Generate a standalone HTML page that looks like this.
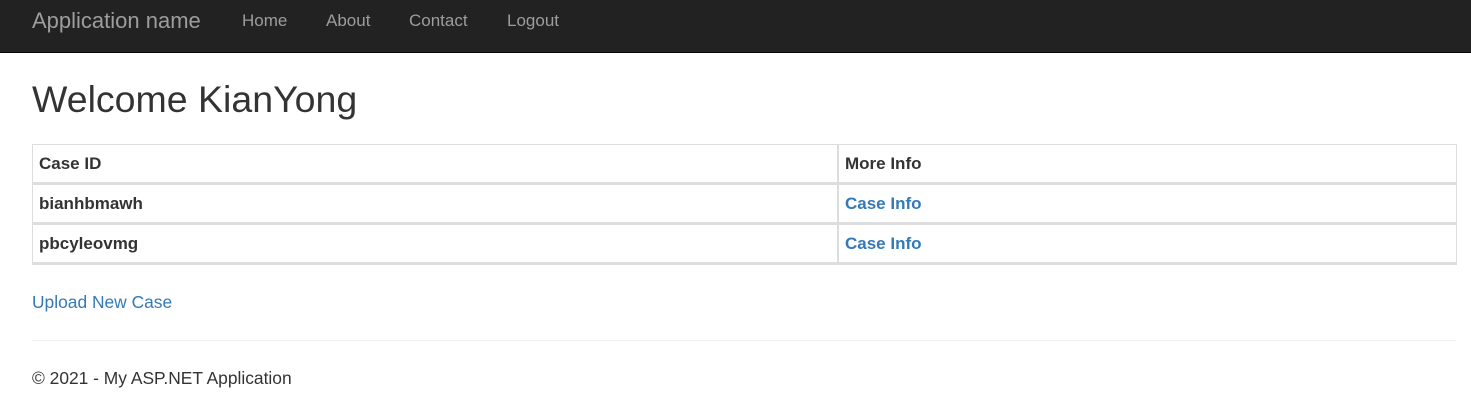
<!DOCTYPE html>
<html><head><style>
body{margin:0;width:1471px;height:415px;background:#fff;font-family:"Liberation Sans",Arial,sans-serif;color:#333;position:relative;overflow:hidden}
.nav{position:absolute;left:0;top:0;width:1471px;height:52px;background:#222;border-bottom:1px solid #080808}
.nav span{position:absolute;top:0;line-height:42px;color:#9d9d9d;font-size:17px}
.nav .brand{font-size:22px;left:32px}
h1{position:absolute;left:32px;top:76px;margin:0;font-weight:400;font-size:37.5px;line-height:46px}
table{position:absolute;left:32px;top:144px;width:1425px;border-collapse:collapse}
td{border:1px solid #ddd;height:37px;padding:0 0 0 6px;font-weight:bold;font-size:17px;vertical-align:middle}
tr td{border-bottom:3px solid #ddd}
td:first-child{width:798px}
td:last-child{border-left:2px solid #ddd}
a{color:#337ab7;text-decoration:none}
.up{position:absolute;left:32px;top:291px;font-size:17.4px;line-height:22px}
hr{position:absolute;left:32px;top:340px;width:1424px;margin:0;border:0;border-top:1px solid #eee}
.ft{position:absolute;left:32px;top:367px;font-size:17.4px;line-height:22px}
</style></head><body>
<div class="nav"><span class="brand">Application name</span><span style="left:242px">Home</span><span style="left:326px">About</span><span style="left:409px">Contact</span><span style="left:507px">Logout</span></div>
<h1>Welcome KianYong</h1>
<table>
<tr><td>Case ID</td><td>More Info</td></tr>
<tr><td>bianhbmawh</td><td><a>Case Info</a></td></tr>
<tr><td>pbcyleovmg</td><td><a>Case Info</a></td></tr>
</table>
<a class="up">Upload New Case</a>
<hr>
<div class="ft">© 2021 - My ASP.NET Application</div>
</body></html>
